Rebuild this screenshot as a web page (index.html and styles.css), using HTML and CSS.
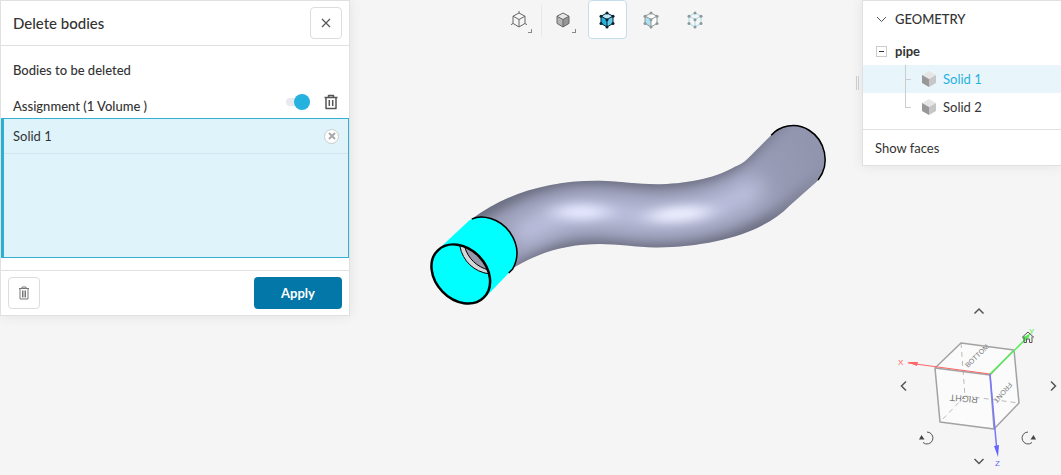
FILE: index.html
```html
<!DOCTYPE html>
<html lang="en">
<head>
  <meta charset="UTF-8">
  <meta name="viewport" content="width=device-width, initial-scale=1.0">
  <title>Delete bodies</title>
  <link rel="stylesheet" href="styles.css">
</head>
<body>
  <svg width="0" height="0" class="defs" aria-hidden="true">
    <symbol id="trash" viewBox="0 0 16 16">
      <path d="M1.500 3.500h13M5.500 3.500v-2h5v2M3 3.500v11h10v-11M6.300 6v6M9.700 6v6" fill="none" stroke="currentColor" stroke-width="1.500" stroke-linejoin="round"/>
    </symbol>
    <symbol id="solid" viewBox="0 0 16 18">
      <path d="M8 1l7 4-7 4-7-4z" fill="#e6e6e6"/>
      <path d="M1 5l7 4v8l-7-4z" fill="#989898"/>
      <path d="M15 5l-7 4v8l7-4z" fill="#c6c6c6"/>
    </symbol>
    <symbol id="wire" viewBox="0 0 18 18">
      <path d="M9 2l6 3.200v7.200L9 16l-6-3.600V5.200zM3 5.200l6 3.300 6-3.300M9 8.500V16" fill="none" stroke="currentColor" stroke-linejoin="round"/>
    </symbol>
    <symbol id="dots" viewBox="0 0 18 18">
      <g fill="currentColor">
        <circle cx="9" cy="2" r="1.500"/><circle cx="15" cy="5.200" r="1.500"/><circle cx="15" cy="12.500" r="1.500"/>
        <circle cx="9" cy="16" r="1.500"/><circle cx="3" cy="12.500" r="1.500"/><circle cx="3" cy="5.200" r="1.500"/><circle cx="9" cy="8.700" r="1.500"/>
      </g>
    </symbol>
  </svg>

  <div class="app">
    <form class="panel">
      <header class="panel-head">
        <h2>Delete bodies</h2>
        <button type="button" class="btn" aria-label="Close">
          <svg width="10" height="10" viewBox="0 0 10 10"><path d="M1 1l8 8M9 1L1 9" stroke="#555" stroke-width="1.200"/></svg>
        </button>
      </header>
      <div class="panel-body">
        <h3>Bodies to be deleted</h3>
        <div class="assign">
          <label for="assign">Assignment (1 Volume )</label>
          <input type="checkbox" id="assign" class="toggle" checked>
          <button type="button" class="icon-btn" aria-label="Clear assignment"><svg width="16" height="16"><use href="#trash"/></svg></button>
        </div>
        <ul class="bodies">
          <li>
            <span>Solid 1</span>
            <button type="button" class="remove" aria-label="Remove Solid 1">
              <svg width="8" height="8" viewBox="0 0 8 8"><path d="M1 1l6 6M7 1L1 7" stroke="#a6a9ab" stroke-width="2"/></svg>
            </button>
          </li>
        </ul>
      </div>
      <footer class="panel-foot">
        <button type="button" class="btn" aria-label="Delete">
          <svg width="12" height="14" viewBox="0 0 12 14"><path d="M1 2.500h10M4 2.500v-1.500h4v1.500M2 3v10h8V3M4.500 4.500v7M6 4.500v7M7.500 4.500v7" fill="none" stroke="#777"/></svg>
        </button>
        <button type="button" class="apply">Apply</button>
      </footer>
    </form>

    <main class="viewport">
      <nav class="toolbar">
        <button class="tool split" aria-label="Wireframe">
          <svg width="18" height="18" viewBox="0 0 18 18"><use href="#wire"/><path d="M3 12.500l-2 1.200M15 12.500l2 1.200M9 2V0" stroke="currentColor"/></svg>
          <i class="corner"></i>
        </button>
        <button class="tool" aria-label="Shaded">
          <svg width="18" height="18" viewBox="0 0 18 18"><path d="M9 2l6 3.200-6 3.300-6-3.300z" fill="#e8e8e8"/><path d="M3 5.200l6 3.300V16l-6-3.600z" fill="#b4b4b4"/><path d="M15 5.200L9 8.500V16l6-3.600z" fill="#969696"/><use href="#wire"/></svg>
          <i class="corner"></i>
        </button>
        <button class="tool active" aria-label="Select volumes">
          <svg width="18" height="18" viewBox="0 0 18 18"><path d="M9 2l6 3.200-6 3.300-6-3.300z" fill="#bce7f5"/><path d="M3 5.200l6 3.300V16l-6-3.600z" fill="#25b2df"/><path d="M15 5.200L9 8.500V16l6-3.600z" fill="#63c9e8"/><use href="#wire"/><use href="#dots"/></svg>
        </button>
        <button class="tool faded" aria-label="Select faces">
          <svg width="18" height="18" viewBox="0 0 18 18"><path d="M9 2l6 3.200v7.200L9 16z" fill="#fff"/><path d="M3 5.200l6 3.300V16l-6-3.600z" fill="#a9e2f2"/><use href="#wire"/><use href="#dots"/></svg>
        </button>
        <button class="tool faded" aria-label="Select vertices">
          <svg width="18" height="18" viewBox="0 0 18 18"><path d="M9 2l6 3.200v7.200L9 16l-6-3.600V5.200zM3 5.200l6 3.300 6-3.300M9 8.500V16" fill="none" stroke="#a5dcea"/><use href="#dots"/></svg>
        </button>
      </nav>

      <svg class="model" viewBox="350 42 513 433" role="img" aria-label="Pipe model">
        <defs>
          <clipPath id="pipe">
            <path d="M472 219C505 194 548 180 600 180.500C620 181 638 184 657 184C685 184 715 178 733 168C741 164 744 163 748 159L772 135C780 126 796 121 810 130C826 140 832 163 819 180L790 206C765 232 715 247 657 247.500C635 247 620 244 600 244C570 244 542 251 515 267L490 286z"/>
          </clipPath>
          <filter id="edge" x="-20%" y="-40%" width="140%" height="180%"><feGaussianBlur stdDeviation="6"/></filter>
          <filter id="soft" x="-30%" y="-60%" width="160%" height="220%"><feGaussianBlur stdDeviation="9"/></filter>
          <filter id="shine" x="-60%" y="-200%" width="220%" height="500%"><feGaussianBlur stdDeviation="11 5"/></filter>
          <linearGradient id="end" x1="740" y1="180" x2="815" y2="150" gradientUnits="userSpaceOnUse">
            <stop offset="0" stop-color="#9094ac" stop-opacity="0"/>
            <stop offset="1" stop-color="#9094ac" stop-opacity=".9"/>
          </linearGradient>
        </defs>
        <g clip-path="url(#pipe)">
          <path d="M430 120h400v190H430z" fill="#6a6d80"/>
          <path d="M480 256C530 219 565 211 600 212C620 213 640 216 657 216C700 216 737 204 765 184L825 130" fill="none" stroke="#9c9fb9" stroke-width="54" filter="url(#edge)"/>
          <path d="M525 232C560 213 580 211 600 212C620 213 640 216 657 216C700 216 730 205 756 188" fill="none" stroke="#bcc0de" stroke-width="24" stroke-linecap="round" filter="url(#soft)"/>
          <ellipse cx="582" cy="212" rx="28" ry="8" fill="#e6e8ff" filter="url(#shine)"/>
          <ellipse cx="680" cy="214" rx="32" ry="8" fill="#eceeff" transform="rotate(-5 680 214)" filter="url(#shine)"/>
          <path d="M730 110h105v125H730z" fill="url(#end)"/>
        </g>
        <path d="M772 135C780 126 796 121 810 130C826 140 832 163 819 180" fill="none" stroke="#000" stroke-width="1.500"/>

        <!-- selected end of the pipe -->
        <path d="M442 246L470 220C482 214 500 218 510 232C519 245 519 258 513 269L485 298L455 290z" fill="#00ffff"/>
        <path d="M472 219C482 214 500 218 510 232C519 245 519 258 513 269L509 273" fill="none" stroke="#000" stroke-width="1.500"/>
        <ellipse cx="461" cy="274" rx="33" ry="25.500" transform="rotate(46 461 274)" fill="#00ffff"/>
        <path d="M460 246C463 261 474 272 490 274C486 260 474 249 460 246z" fill="#d4d6da"/>
        <path d="M465 247C468 258 477 267 488 270C484 260 476 251 465 247z" fill="#9798aa"/>
        <path d="M460 246C463 261 474 272 490 274M465 247C468 258 477 267 489 270" fill="none" stroke="#000"/>
        <ellipse cx="461" cy="274" rx="33" ry="25.500" transform="rotate(46 461 274)" fill="none" stroke="#000" stroke-width="2.500"/>
      </svg>
    </main>

    <div class="side">
      <section class="tree">
        <span class="grip"></span>
        <button class="row title">
          <svg width="11" height="7" viewBox="0 0 11 7"><path d="M1 1l4.500 4.500L10 1" fill="none" stroke="#555"/></svg>
          GEOMETRY
        </button>
        <button class="row part"><i class="minus"></i>pipe</button>
        <ul class="solids">
          <li><button class="solid selected"><svg width="16" height="18"><use href="#solid"/></svg>Solid 1</button></li>
          <li><button class="solid"><svg width="16" height="18"><use href="#solid"/></svg>Solid 2</button></li>
        </ul>
        <button class="faces">Show faces</button>
      </section>

      <div class="gizmo">
        <svg class="cube" viewBox="0 0 171 175">
          <path d="M71 43L124 50L129 103L104 129L50 122L45 68z" fill="#fff" fill-opacity=".6"/>
          <path d="M71 43L75 96L129 103M75 96L50 122" fill="none" stroke="#bbb" stroke-dasharray="5 4"/>
          <g class="faces-text">
            <text transform="translate(88 97) rotate(185)" font-size="9">RIGHT</text>
            <text transform="translate(78 68) rotate(-44)" font-size="7">BOTTOM</text>
            <text transform="translate(119 82) rotate(131)" font-size="7">FRONT</text>
          </g>
          <path d="M71 43L124 50L129 103L104 129L50 122L45 68zM45 68L100 75L104 129M100 75L124 50" fill="none" stroke="#a2a2a2" stroke-width="1.500" stroke-linejoin="round"/>
          <path d="M100 74L18 63" stroke="#f66"/><path d="M17 62l11 0-1 4z" fill="#f66"/>
          <path d="M100 74L139 36" stroke="#5e5" stroke-width="1.500"/><path d="M141 33l-5 8-4-3z" fill="#5e5"/>
          <path d="M100 74L107 152" stroke="#77f" stroke-width="1.500"/><path d="M108 157l-4-11 5-1z" fill="#66f"/>
          <text x="8" y="65" fill="#f55" font-size="8">X</text>
          <text x="139" y="34" fill="#4e4" font-size="8">Y</text>
          <text x="105" y="166" fill="#66f" font-size="8">Z</text>
        </svg>
        <button class="nav up" aria-label="Rotate up"><svg width="12" height="12" viewBox="0 0 12 12"><path d="M1.500 8.500L6 4l4.500 4.500"/></svg></button>
        <button class="nav down" aria-label="Rotate down"><svg width="12" height="12" viewBox="0 0 12 12"><path d="M1.500 4L6 8.500 10.500 4"/></svg></button>
        <button class="nav left" aria-label="Rotate left"><svg width="12" height="12" viewBox="0 0 12 12"><path d="M8 1.500L3.500 6 8 10.500"/></svg></button>
        <button class="nav right" aria-label="Rotate right"><svg width="12" height="12" viewBox="0 0 12 12"><path d="M4 1.500L8.500 6 4 10.500"/></svg></button>
        <button class="nav home" aria-label="Home view"><svg width="14" height="14" viewBox="0 0 14 14"><path d="M1 7.500L7 2l6 5.500M3 6.500V12.500h2.500V9h3v3.500H11V6.500" fill="none"/></svg></button>
        <button class="nav ccw" aria-label="Roll left"><svg width="16" height="16" viewBox="0 0 16 16"><path d="M8 2A6 6 0 1 1 4 12.500"/><path class="tip" d="M0 9.500l2.500-4.500 3 4.500z"/></svg></button>
        <button class="nav cw" aria-label="Roll right"><svg width="16" height="16" viewBox="0 0 16 16"><path d="M8 2A6 6 0 1 0 12 12.500"/><path class="tip" d="M16 9.500l-2.500-4.500-3 4.500z"/></svg></button>
      </div>
    </div>
  </div>
</body>
</html>
```
FILE: styles.css
```css
* { box-sizing: border-box; }
body { margin: 0; background: #f5f5f5; color: #333; font: 13px/20px Lato, sans-serif; }
h2, h3, ul { margin: 0; padding: 0; }
ul { list-style: none; }
button { font: inherit; color: inherit; background: none; border: none; padding: 0; cursor: pointer; }
svg { display: block; }
.defs { position: absolute; }

.app { display: grid; grid-template-columns: 350px minmax(0, 1fr) 199px; min-height: 100vh; }

/* left panel */
.panel { align-self: start; background: #fff; border: 1px solid #e0e0e0; box-shadow: 0 0 12px rgba(0, 0, 0, .08); }
.panel-head { display: flex; justify-content: space-between; align-items: center; height: 45px; padding: 0 7px 0 12px; border-bottom: 1px solid #e0e0e0; }
h2 { font-size: 15px; font-weight: 500; }
h3 { font-size: 13px; font-weight: 500; }
.btn { display: flex; align-items: center; justify-content: center; width: 32px; height: 32px; background: #fff; border: 1px solid #ddd; border-radius: 4px; }
.panel-body { padding: 14px 0 12px; }
.panel-body h3 { padding-left: 12px; }
.assign { display: flex; align-items: flex-start; height: 28px; margin-top: 10px; padding: 0 10px 0 12px; }
.assign label { flex: 1; padding-top: 6px; font-weight: 500; }
.toggle { appearance: none; display: flex; align-items: center; justify-content: flex-end; width: 24px; height: 8px; margin: 8px 13px 0 0; background: #e8eaf1; border-radius: 4px; }
.toggle::before { content: ""; flex: none; width: 16px; height: 16px; background: #25b2df; border-radius: 50%; }
.icon-btn { margin-top: 4px; color: #555; }
.bodies { height: 140px; background: #def3fa; border: 1px solid #36b0d0; border-left: 3px solid #2bb0d4; }
.bodies li { display: flex; align-items: center; justify-content: space-between; height: 35px; padding: 0 9px; border-bottom: 1px solid #cfe6ef; }
.remove { display: flex; align-items: center; justify-content: center; width: 15px; height: 15px; background: #fff; border: 1px solid #ccc; border-radius: 50%; }
.panel-foot { display: flex; justify-content: space-between; padding: 6px 7px; border-top: 1px solid #e0e0e0; }
.apply { width: 88px; height: 32px; background: #0277a8; color: #fff; border-radius: 4px; font-weight: 700; }

/* 3d view */
.viewport { display: flex; flex-direction: column; }
.toolbar { display: flex; justify-content: center; gap: 5px; height: 42px; padding-left: 2px; }
.tool { position: relative; display: flex; align-items: center; justify-content: center; width: 39px; height: 39px; border: 1px solid transparent; border-radius: 4px; color: #666; }
.tool.active { background: #fff; border-color: #c5dde8; color: #06222e; }
.tool.faded { color: #8f9899; }
.split::after { content: ""; position: absolute; top: 4px; right: -4px; width: 1px; height: 32px; background: #e8e8e8; }
.corner { position: absolute; right: 6px; bottom: 5px; width: 4px; height: 4px; border: solid #888; border-width: 0 1px 1px 0; }
.model { flex: 1; width: 100%; min-height: 0; }

/* right side */
.side { display: flex; flex-direction: column; justify-content: space-between; }
.tree { position: relative; background: #fff; border: 1px solid #e0e0e0; border-right: none; box-shadow: 0 0 12px rgba(0, 0, 0, .08); }
.grip { position: absolute; left: -7px; top: 75px; width: 3px; height: 14px; border: solid #ccc; border-width: 0 1px; }
.row { display: flex; align-items: center; width: 100%; height: 32px; padding-left: 13px; }
.title { height: 36px; gap: 8px; font-weight: 500; }
.part { height: 28px; gap: 8px; font-weight: 700; }
.minus { display: flex; align-items: center; justify-content: center; width: 11px; height: 11px; border: 1px solid #ccc; }
.minus::before { content: ""; width: 5px; height: 1px; background: #333; }
.solids { padding-bottom: 8px; }
.solid { position: relative; display: flex; align-items: center; gap: 6px; width: 100%; height: 28px; padding-left: 58px; }
.solid::before { content: ""; position: absolute; left: 42px; top: 0; width: 5px; height: 14px; border: solid #ccc; border-width: 0 0 1px 1px; }
.selected { background: #e8f5fb; color: #25b2df; }
.selected::after { content: ""; position: absolute; left: 42px; top: 14px; width: 1px; height: 14px; background: #ccc; }
.faces { display: block; width: 100%; height: 36px; padding-left: 12px; border-top: 1px solid #e0e0e0; text-align: left; }

/* view cube */
.gizmo { position: relative; align-self: flex-end; width: 171px; }
.cube { width: 100%; font-family: "Liberation Sans", sans-serif; }
.faces-text { fill: #777; }
.nav { position: absolute; fill: none; stroke: #555; stroke-width: 1.5; }
.tip { fill: #444; stroke: none; }
.up { left: 83px; top: 5px; }
.down { left: 83px; top: 155px; }
.left { left: 8px; top: 80px; }
.right { left: 157px; top: 80px; }
.home { left: 131px; top: 30px; stroke-width: 1; }
.ccw { left: 29px; top: 130px; stroke-width: 1; }
.cw { left: 130px; top: 130px; stroke-width: 1; }
```
